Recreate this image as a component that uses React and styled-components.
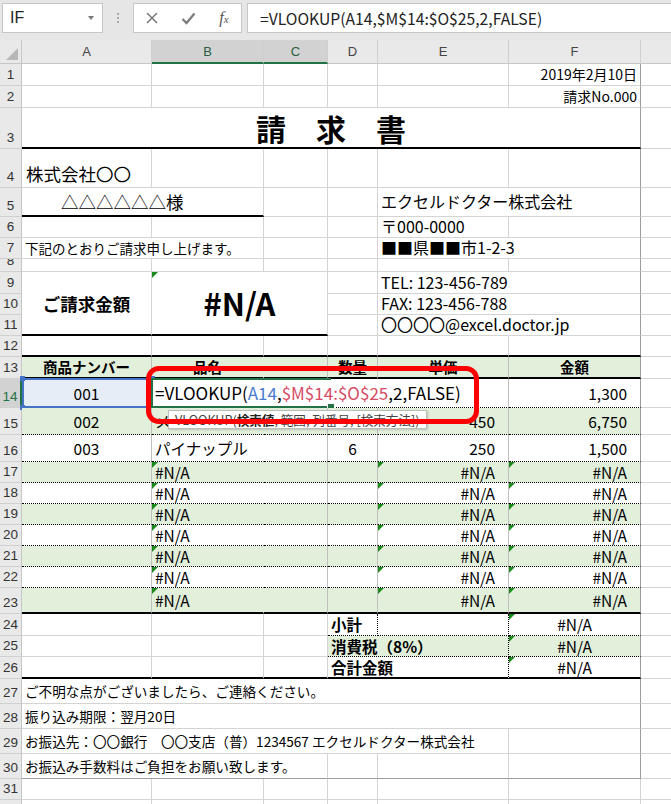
import React from 'react';
import styled, { createGlobalStyle, css } from 'styled-components';

const GlobalStyle = createGlobalStyle`
  html, body { margin: 0; padding: 0; background: #fff; overflow: hidden; }
  body { font-family: "Noto Sans CJK JP", "Noto Sans", sans-serif; }
`;

const GRID = '#d4d4d4';
const TABLE = '#bfbfbf';
const PRINT = '#9d9d9d';
const GREEN = '#e2efda';
const WHITE = '#ffffff';
const XL = '#217346';
const HEAD_BG = '#e9e9e9';
const HEAD_SEL = '#d2d2d2';

const LETTERS = ['A', 'B', 'C', 'D', 'E', 'F', 'G'];
const COLW = { A: 130, B: 112, C: 64, D: 50, E: 131, F: 132, G: 80 };
const COLNUM = { A: 2, B: 3, C: 4, D: 5, E: 6, F: 7, G: 8 };

const borderCss = (kind) => {
  switch (kind) {
    case 'thick': return '2px solid #000';
    case 'dot': return '1px dotted #000';
    case 'thin': return `1px solid ${TABLE}`;
    case 'print': return `1px solid ${PRINT}`;
    case 'none': return '1px solid transparent';
    default: return `1px solid ${GRID}`;
  }
};

const JUSTIFY = { left: 'flex-start', center: 'center', right: 'flex-end' };

// ---------- formula bar ----------
const FormulaBar = styled.div`
  height: 40px;
  box-sizing: border-box;
  padding: 3px 0 7px 2px;
  display: flex;
  background: #e6e6e6;
`;

const NameBox = styled.div`
  width: 101px;
  box-sizing: border-box;
  background: #fff;
  border: 1px solid #c6c6c6;
  display: flex;
  align-items: center;
  padding: 0 8px 0 7px;
  font-family: "Liberation Sans", sans-serif;
  font-size: 16px;
  color: #222;
`;

const Caret = styled.span`
  margin-left: auto;
  width: 0;
  height: 0;
  border-top: 4px solid #7a7a7a;
  border-left: 3.5px solid transparent;
  border-right: 3.5px solid transparent;
`;

const Grip = styled.div`
  width: 30px;
  display: flex;
  flex-direction: column;
  align-items: center;
  justify-content: center;
  gap: 2px;
`;

const GripDot = styled.span`
  width: 2px;
  height: 2px;
  background: #ababab;
`;

const FxBox = styled.div`
  width: 109px;
  box-sizing: border-box;
  background: #fff;
  border: 1px solid #c6c6c6;
  display: grid;
  grid-template-columns: repeat(3, 36px);
  align-items: center;
  justify-items: center;
`;

const Fx = styled.span`
  font-family: "Liberation Serif", serif;
  font-style: italic;
  font-size: 16px;
  color: #555;
  small { font-size: 11px; }
`;

const FormulaInput = styled.div`
  flex: 1;
  margin-left: 5px;
  background: #fff;
  border: 1px solid #c6c6c6;
  border-right: none;
  display: flex;
  align-items: center;
  padding-left: 12px;
  font-size: 15.7px;
  color: #222;
  white-space: nowrap;
`;

// ---------- sheet ----------
const Sheet = styled.div`
  display: grid;
  grid-template-columns: 22px ${LETTERS.map((l) => COLW[l] + 'px').join(' ')};
  grid-template-rows: ${(p) => p.$rows};
`;

const Corner = styled.div`
  grid-column: 1;
  grid-row: 1;
  position: relative;
  background: ${HEAD_BG};
  border-right: 1px solid #c6c6c6;
  border-bottom: 1px solid #c6c6c6;
  &::after {
    content: '';
    position: absolute;
    right: 3px;
    bottom: 3px;
    border-left: 12px solid transparent;
    border-bottom: 12px solid #b7b7b7;
  }
`;

const ColHead = styled.div`
  grid-column: ${(p) => p.$col};
  grid-row: 1;
  display: flex;
  align-items: center;
  justify-content: center;
  background: ${(p) => (p.$sel ? HEAD_SEL : HEAD_BG)};
  border-right: 1px solid #cfcfcf;
  border-bottom: ${(p) => (p.$sel ? `2px solid ${XL}` : '1px solid #c6c6c6')};
  font-family: "Liberation Sans", sans-serif;
  font-size: 13px;
  color: ${(p) => (p.$sel ? '#2b5d40' : '#444')};
`;

const RowHead = styled.div`
  grid-column: 1;
  grid-row: ${(p) => p.$row};
  display: flex;
  align-items: flex-end;
  justify-content: center;
  padding-bottom: 2px;
  box-sizing: border-box;
  overflow: hidden;
  background: ${(p) => (p.$sel ? HEAD_SEL : HEAD_BG)};
  border-right: ${(p) => (p.$sel ? `2px solid ${XL}` : '1px solid #c6c6c6')};
  border-bottom: 1px solid #d0d0d0;
  font-family: "Liberation Sans", sans-serif;
  font-size: 13.5px;
  line-height: 16px;
  color: ${(p) => (p.$sel ? XL : '#333')};
`;

const Cell = styled.div`
  grid-column: ${(p) => p.$col} / span ${(p) => p.$cs || 1};
  grid-row: ${(p) => p.$row} / span ${(p) => p.$rs || 1};
  position: relative;
  display: flex;
  min-width: 0;
  box-sizing: border-box;
  align-items: ${(p) => p.$valign || 'center'};
  justify-content: ${(p) => JUSTIFY[p.$align || 'left']};
  padding: 0 ${(p) => p.$padR ?? 3}px ${(p) => p.$padB ?? 0}px ${(p) => p.$padL ?? 3}px;
  background: ${(p) => p.$fill};
  border-right: ${(p) => borderCss(p.$br)};
  border-bottom: ${(p) => borderCss(p.$bb)};
  font-size: ${(p) => p.$size || 14}px;
  font-weight: ${(p) => (p.$bold ? 700 : 400)};
  line-height: 1.2;
  white-space: nowrap;
  color: #000;
  ${(p) => p.$err && css`
    &::before {
      content: '';
      position: absolute;
      left: 0;
      top: 0;
      border-top: 6px solid #1b8a1b;
      border-right: 6px solid transparent;
    }
  `}
`;

const Ref = styled.span`
  color: ${(p) => p.$c};
`;

const RefFrame = styled.div`
  position: absolute;
  left: 0;
  top: -1px;
  width: 131px;
  height: 30px;
  box-sizing: border-box;
  border: 2px solid #4472c4;
  pointer-events: none;
`;

const Handle = styled.span`
  position: absolute;
  width: 5px;
  height: 5px;
  background: #4472c4;
  ${(p) => (p.$v === 't' ? 'top: -4px;' : 'bottom: -4px;')}
  ${(p) => (p.$h === 'l' ? 'left: -4px;' : 'right: -4px;')}
`;

const ActiveFrame = styled.div`
  position: absolute;
  left: -1px;
  top: -1px;
  width: 180px;
  height: 30px;
  box-sizing: border-box;
  border: 2px solid ${XL};
  border-right: none;
  pointer-events: none;
`;

const FillHandle = styled.span`
  position: absolute;
  right: -4px;
  bottom: -5px;
  width: 6px;
  height: 6px;
  background: ${XL};
  border: 1px solid #fff;
`;

// ---------- overlays ----------
const Screen = styled.div`
  position: relative;
  width: 671px;
  height: 804px;
  overflow: hidden;
  background: #fff;
`;

const ArgTip = styled.div`
  position: absolute;
  left: 168px;
  top: 410px;
  height: 19px;
  box-sizing: border-box;
  padding: 0 6px;
  display: flex;
  align-items: center;
  background: #fff;
  border: 1px solid #bcbcbc;
  box-shadow: 1px 1px 2px rgba(0, 0, 0, 0.18);
  font-size: 12.6px;
  color: #444;
  white-space: nowrap;
  b { font-weight: 700; color: #222; }
`;

const Callout = styled.div`
  position: absolute;
  left: 146px;
  top: 366px;
  width: 333px;
  height: 58px;
  box-sizing: border-box;
  border: 5px solid #fe0000;
  border-radius: 13px;
  pointer-events: none;
`;

// ---------- data ----------
const T_BR = { A: 'thin', B: 'none', C: 'thin', D: 'thin', E: 'thin' };
const tRow = (h, fill, bb, cells) => ({ h, fill, bb, br: T_BR, cells });
const na = (c, align) => ({ c, t: '#N/A', align, err: true, size: 15.5, padR: align === 'right' ? 13 : 3 });
const num = (c, t) => ({ c, t, align: 'right', padR: 13, size: 15.5 });
const mid = (c, t) => ({ c, t, align: 'center', size: 15.5 });
const head = (c, t) => ({ c, t, align: 'center', bold: true, size: 14.5 });

const formula = (
  <>
    =VLOOKUP(<Ref $c="#4a7bd0">A14</Ref>,<Ref $c="#d64c66">$M$14:$O$25</Ref>,2,FALSE)
  </>
);

const naRow = (h, fill, bb) => tRow(h, fill, bb, [
  { ...na('B', 'left'), padL: 3 },
  na('E', 'right'),
  na('F', 'right'),
]);

const ROWS = [
  { h: 22, cells: [{ c: 'F', t: '2019年2月10日', align: 'right' }] },
  { h: 22, cells: [{ c: 'F', t: '請求No.000', align: 'right' }] },
  { h: 41, cells: [{ c: 'A', cs: 6, t: '請　求　書', align: 'center', size: 30, bold: true, bb: 'thick', padB: 0 }] },
  { h: 39, cells: [{ c: 'A', t: '株式会社〇〇', size: 17.5, valign: 'flex-end', padB: 3, padL: 4 }] },
  { h: 29, cells: [
    { c: 'A', cs: 2, t: '　　△△△△△△様', size: 17.5, bb: 'thick', padL: 4 },
    { c: 'E', cs: 2, t: 'エクセルドクター株式会社', size: 16 },
  ] },
  { h: 21, cells: [{ c: 'E', t: '〒000-0000', size: 16 }] },
  { h: 21, cells: [
    { c: 'A', cs: 2, t: '下記のとおりご請求申し上げます。', size: 13.5 },
    { c: 'E', cs: 2, t: '■■県■■市1-2-3', size: 16 },
  ] },
  { h: 13 },
  { h: 22, cells: [
    { c: 'A', rs: 3, t: 'ご請求金額', bold: true, size: 17.5, align: 'center', bb: 'thick' },
    { c: 'B', cs: 2, rs: 3, t: '#N/A', bold: true, size: 31, align: 'center', bb: 'thick', err: true },
    { c: 'E', cs: 2, t: 'TEL: 123-456-789', size: 16 },
  ] },
  { h: 21, cells: [{ c: 'E', cs: 2, t: 'FAX: 123-456-788', size: 16 }] },
  { h: 21, cells: [{ c: 'E', cs: 2, t: '〇〇〇〇@excel.doctor.jp', size: 16 }] },
  { h: 21, bb: 'thick' },
  tRow(22, GREEN, 'thick', [head('A', '商品ナンバー'), head('B', '品名'), head('D', '数量'), head('E', '単価'), head('F', '金額')]),
  tRow(29, WHITE, 'dot', [
    { ...mid('A', '001'), fill: '#e7edf7', frame: 'ref' },
    { c: 'B', cs: 4, t: formula, size: 17, frame: 'active' },
    num('F', '1,300'),
  ]),
  tRow(27, GREEN, 'dot', [mid('A', '002'), { c: 'B', t: 'メロン', size: 15.5 }, mid('D', '15'), num('E', '450'), num('F', '6,750')]),
  tRow(27, WHITE, 'dot', [mid('A', '003'), { c: 'B', t: 'パイナップル', size: 15.5 }, mid('D', '6'), num('E', '250'), num('F', '1,500')]),
  naRow(21, GREEN, 'dot'),
  naRow(21, WHITE, 'dot'),
  naRow(21, GREEN, 'dot'),
  naRow(21, WHITE, 'dot'),
  naRow(21, GREEN, 'dot'),
  naRow(21, WHITE, 'dot'),
  naRow(26, GREEN, 'thick'),
  { h: 22, cells: [
    { c: 'D', t: '小計', bold: true, size: 15.5, br: 'dot', bb: 'dot' },
    { c: 'E', t: '', br: 'dot', bb: 'dot' },
    { ...na('F', 'center'), bb: 'dot' },
  ] },
  { h: 21, cells: [
    { c: 'D', cs: 2, t: '消費税（8%）', bold: true, size: 15.5, fill: GREEN, br: 'dot', bb: 'dot' },
    { ...na('F', 'center'), fill: GREEN, bb: 'dot' },
  ] },
  { h: 22, bb: 'thick', cells: [
    { c: 'D', cs: 2, t: '合計金額', bold: true, size: 15.5, br: 'dot' },
    na('F', 'center'),
  ] },
  { h: 25, cells: [{ c: 'A', cs: 6, t: 'ご不明な点がございましたら、ご連絡ください。', size: 13.6 }] },
  { h: 25, cells: [{ c: 'A', cs: 6, t: '振り込み期限：翌月20日', size: 13.6 }] },
  { h: 25, cells: [{ c: 'A', cs: 5, t: 'お振込先：〇〇銀行　〇〇支店（普）1234567 エクセルドクター株式会社', size: 13.6 }] },
  { h: 25, bb: 'print', cells: [{ c: 'A', cs: 3, t: 'お振込み手数料はご負担をお願い致します。', size: 13.6 }] },
  { h: 21 },
  { h: 21 },
];

const defaultRight = (row, L, n) => {
  if (row.br && row.br[L]) return row.br[L];
  if (L === 'F' && n <= 30) return 'print';
  return 'grid';
};
const defaultBottom = (row, L) => (L === 'G' ? 'grid' : row.bb || 'grid');
const defaultFill = (row, L) => (L === 'G' ? WHITE : row.fill || WHITE);

function frameFor(kind) {
  if (kind === 'ref') {
    return (
      <RefFrame>
        <Handle $v="t" $h="l" />
        <Handle $v="t" $h="r" />
        <Handle $v="b" $h="l" />
        <Handle $v="b" $h="r" />
      </RefFrame>
    );
  }
  if (kind === 'active') {
    return (
      <ActiveFrame>
        <FillHandle />
      </ActiveFrame>
    );
  }
  return null;
}

function renderBody() {
  const out = [];
  const taken = new Set();
  ROWS.forEach((row, i) => {
    const n = i + 1;
    const r = i + 2;
    out.push(<RowHead key={`rh${n}`} $row={r} $sel={n === 14}>{n}</RowHead>);
    const cells = row.cells || [];
    LETTERS.forEach((L) => {
      const col = COLNUM[L];
      const cell = cells.find((x) => x.c === L);
      if (cell) {
        const cs = cell.cs || 1;
        const rs = cell.rs || 1;
        for (let dr = 0; dr < rs; dr++) {
          for (let dc = 0; dc < cs; dc++) taken.add(`${r + dr}:${col + dc}`);
        }
        const last = LETTERS[LETTERS.indexOf(L) + cs - 1];
        out.push(
          <Cell
            key={`c${n}${L}`}
            $col={col}
            $row={r}
            $cs={cs}
            $rs={rs}
            $align={cell.align}
            $valign={cell.valign}
            $fill={cell.fill || defaultFill(row, L)}
            $br={cell.br || defaultRight(row, last, n)}
            $bb={cell.bb || defaultBottom(row, L)}
            $size={cell.size}
            $bold={cell.bold}
            $padL={cell.padL}
            $padR={cell.padR}
            $padB={cell.padB}
            $err={cell.err}
          >
            {cell.t}
            {frameFor(cell.frame)}
          </Cell>
        );
      } else if (!taken.has(`${r}:${col}`)) {
        out.push(
          <Cell
            key={`c${n}${L}`}
            $col={col}
            $row={r}
            $fill={defaultFill(row, L)}
            $br={defaultRight(row, L, n)}
            $bb={defaultBottom(row, L)}
          />
        );
      }
    });
  });
  return out;
}

const rowTemplate = `24px ${ROWS.map((r) => r.h + 'px').join(' ')}`;

export default function App() {
  return (
    <>
      <GlobalStyle />
      <Screen>
        <FormulaBar>
          <NameBox>
            IF
            <Caret />
          </NameBox>
          <Grip>
            <GripDot />
            <GripDot />
            <GripDot />
          </Grip>
          <FxBox>
            <svg width="12" height="12" viewBox="0 0 12 12">
              <path d="M1 1 L11 11 M11 1 L1 11" stroke="#707070" strokeWidth="1.4" fill="none" />
            </svg>
            <svg width="15" height="13" viewBox="0 0 15 13">
              <path d="M1.5 7 L5.5 11 L13.5 1.5" stroke="#7a7a7a" strokeWidth="2.2" fill="none" />
            </svg>
            <Fx>f<small>x</small></Fx>
          </FxBox>
          <FormulaInput>=VLOOKUP(A14,$M$14:$O$25,2,FALSE)</FormulaInput>
        </FormulaBar>
        <Sheet $rows={rowTemplate}>
          <Corner />
          {LETTERS.map((L) => (
            <ColHead key={L} $col={COLNUM[L]} $sel={L === 'B' || L === 'C'}>{L}</ColHead>
          ))}
          {renderBody()}
        </Sheet>
        <ArgTip>VLOOKUP(<b>検索値</b>, 範囲, 列番号, [検索方法])</ArgTip>
        <Callout />
      </Screen>
    </>
  );
}
